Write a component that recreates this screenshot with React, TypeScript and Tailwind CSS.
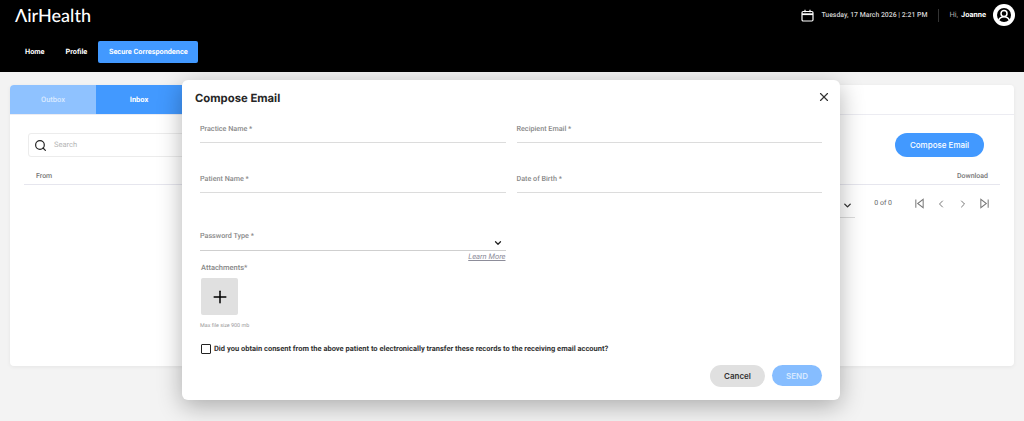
import React from "react";
import { ChevronDown, ChevronLeft, ChevronRight, Plus, Search, X } from "lucide-react";

const Field = ({ label, className = "" }: { label: string; className?: string }) => (
  <div className={`flex-1 border-b border-[#dcdcdc] ${className}`}>
    <div className="text-[7.200px] leading-[10px] font-medium text-[#888]">{label}</div>
  </div>
);

const FirstIcon = () => (
  <svg width="11" height="11" viewBox="0 0 12 12" fill="none" stroke="#777" strokeWidth="1.100"><path d="M2 1.500v9M10 1.500v9L4 6z" /></svg>
);
const LastIcon = () => (
  <svg width="11" height="11" viewBox="0 0 12 12" fill="none" stroke="#777" strokeWidth="1.100"><path d="M10 1.500v9M2 1.500v9L8 6z" /></svg>
);

export default function App() {
  return (
    <div className="relative h-[421px] w-[1024px] overflow-hidden bg-[#f3f3f3] font-['Roboto',sans-serif] [text-rendering:geometricPrecision]">
      <header className="h-[72px] bg-black">
        <div className="flex h-[41px] items-start justify-between pl-[15px] pr-[9px]">
          <div className="mt-[3px] text-[18px] leading-[24px] font-['Lato',sans-serif] font-medium text-white">ΛirHealth</div>
          <div className="mt-[4px] flex h-[22px] items-center">
            <svg width="13" height="13" viewBox="0 0 13 13" fill="none" stroke="white" strokeWidth="1.200">
              <rect x="1" y="2.500" width="11" height="9.500" rx="1.200" />
              <path d="M1 5.200h11" strokeWidth="1.800" />
              <path d="M4 .8v2.500M9 .8v2.500" />
            </svg>
            <span className="ml-[7px] text-[6.900px] font-medium text-[#d4d4d4]">Tuesday, 17 March 2026 | 2:21 PM</span>
            <div className="ml-[11px] h-[13px] w-px bg-[#333]" />
            <span className="ml-[10px] text-[7.500px] text-[#aaa]">Hi,</span>
            <span className="ml-[3px] text-[7.500px] font-bold text-white">Joanne</span>
            <div className="ml-[7px] flex h-[22px] w-[22px] items-center justify-center rounded-full bg-white">
              <svg width="16" height="16" viewBox="0 0 16 16" fill="none">
                <circle cx="8" cy="8" r="7" fill="black" />
                <circle cx="8" cy="6.500" r="3" stroke="white" strokeWidth="1.500" />
                <path d="M2.800 13c1-2.300 3-3.200 5.200-3.200s4.200.9 5.200 3.200" stroke="white" strokeWidth="1.500" />
              </svg>
            </div>
          </div>
        </div>
        <nav className="flex items-center pl-[25px]">
          <a className="text-[7.300px] font-bold text-white">Home</a>
          <a className="ml-[21px] text-[7.300px] font-bold text-white">Profile</a>
          <a className="ml-[11px] flex h-[22px] w-[100px] items-center justify-center rounded-[2px] bg-[#4299ff] text-[7.300px] font-bold text-white">Secure Correspondence</a>
        </nav>
      </header>

      <main className="px-[10px] pt-[13px]">
        <section className="h-[281px] rounded-[4px] bg-white shadow-[0_1px_4px_rgba(0,0,0,0.06)]">
          <div className="flex h-[30px] border-b border-[#ececf2]">
            <div className="flex w-[86px] items-center justify-center rounded-tl-[4px] bg-[#8fc2ff] text-[7.500px] font-medium text-[#d8e9ff]">Outbox</div>
            <div className="flex w-[86px] items-center justify-center bg-[#4299ff] text-[7.500px] font-bold text-white">Inbox</div>
          </div>
          <div className="flex items-start justify-between pl-[18px] pr-[30px] pt-[18px]">
            <div className="flex h-[24px] w-[200px] items-center rounded-[3px] border border-[#ececec] pl-[5px]">
              <Search size={13} strokeWidth={2.200} className="text-[#222]" />
              <span className="ml-[7px] text-[7.500px] text-[#b5b5b5]">Search</span>
            </div>
            <button className="h-[24px] w-[89px] rounded-full bg-[#4299ff] font-['Inter',sans-serif] text-[8px] font-medium text-white">Compose Email</button>
          </div>
          <div className="mx-[14px] mt-[11px] flex h-[17px] items-center justify-between border-b border-[#e6e6ee] pl-[12px] pr-[12px] text-[7px] font-medium text-[#777]">
            <span>From</span>
            <span>Download</span>
          </div>
          <div className="flex h-[37px] items-center justify-end pr-[24px]">
            <div className="mr-[19px] mt-[5px] flex h-[24px] w-[60px] items-center justify-end border-b border-[#dcdcdc] pr-[2px]">
              <ChevronDown size={11} strokeWidth={3} className="text-[#333]" />
            </div>
            <span className="text-[7px] text-[#666]">0 of 0</span>
            <div className="ml-[22px] flex items-center gap-[10px]">
              <FirstIcon />
              <ChevronLeft size={12} className="text-[#777]" />
              <ChevronRight size={12} className="text-[#777]" />
              <LastIcon />
            </div>
          </div>
        </section>
      </main>

      <div className="absolute left-[182px] top-[80px] h-[320px] w-[658px] rounded-[6px] bg-white px-[13px] shadow-[0_6px_24px_rgba(0,0,0,0.3)]">
        <div className="flex h-[36px] items-start justify-between">
          <h2 className="mt-[5px] font-['Inter',sans-serif] text-[11.300px] font-bold leading-[26px] text-[#262626]">Compose Email</h2>
          <X size={14} strokeWidth={2} className="mr-[-4px] mt-[10px] text-[#333]" />
        </div>
        <div className="mx-[5px]">
          <div className="mt-[8px] flex gap-[11px]">
            <Field label="Practice Name *" className="h-[19px]" />
            <Field label="Recipient Email *" className="h-[19px]" />
          </div>
          <div className="mt-[31px] flex gap-[11px]">
            <Field label="Patient Name *" className="h-[19px]" />
            <Field label="Date of Birth *" className="h-[19px]" />
          </div>
          <div className="mt-[38px] flex gap-[11px]">
            <div className="flex-1">
              <div className="relative h-[20px] border-b border-[#cfcfcf]">
                <div className="text-[7.200px] leading-[10px] font-medium text-[#888]">Password Type *</div>
                <ChevronDown size={10} strokeWidth={3} className="absolute right-[3px] top-[7px] text-[#222]" />
              </div>
              <div className="text-right text-[7.600px] italic leading-[11px] text-[#8d8d9a] underline">Learn More</div>
            </div>
            <div className="flex-1" />
          </div>
          <div className="ml-[1px] text-[7.500px] leading-[11px] font-medium text-[#888]">Attachments*</div>
          <div className="ml-[1px] mt-[5px] flex h-[37px] w-[37px] items-center justify-center rounded-[2px] bg-[#e0e0e0]">
            <Plus size={20} strokeWidth={1.800} className="text-black" />
          </div>
          <div className="mt-[8px] text-[5.400px] leading-[7px] text-[#999]">Max file size 900 mb</div>
          <div className="mt-[14px] flex items-center">
            <div className="ml-[1px] h-[10px] w-[10px] rounded-[1px] border border-[#222]" />
            <span className="ml-[3px] text-[7.500px] leading-[10px] font-bold text-[#333]">Did you obtain consent from the above patient to electronically transfer these records to the receiving email account?</span>
          </div>
        </div>
        <div className="mt-[11px] flex justify-end gap-[7px] pr-[5px] font-['Inter',sans-serif]">
          <button className="h-[22px] w-[55px] rounded-full bg-[#e0e0e0] text-[8px] font-semibold text-[#333]">Cancel</button>
          <button className="h-[21px] w-[50px] rounded-full bg-[#86bdff] text-[8px] font-semibold text-[#d8e9ff]">SEND</button>
        </div>
      </div>
    </div>
  );
}
